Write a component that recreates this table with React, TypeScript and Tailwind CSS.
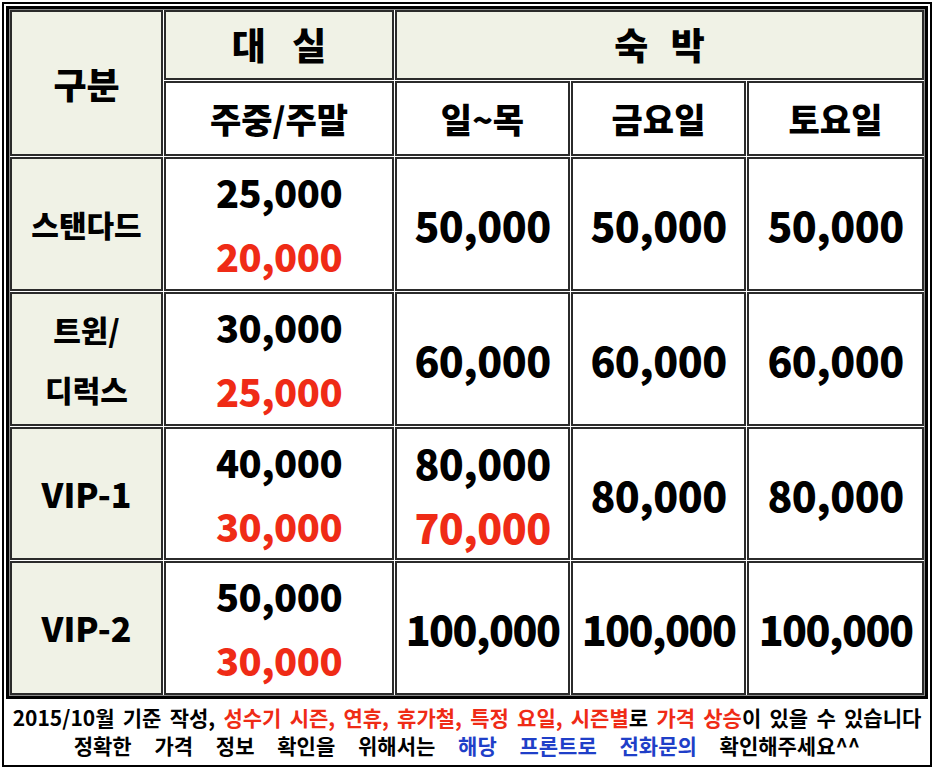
const RED = 'text-[#ef2b16]';

type Row = {
  label: string[];
  latin?: boolean;
  day: string[];
  stay: string[][];
};

const rows: Row[] = [
  {
    label: ['스탠다드'],
    day: ['25,000', '20,000'],
    stay: [['50,000'], ['50,000'], ['50,000']],
  },
  {
    label: ['트윈/', '디럭스'],
    day: ['30,000', '25,000'],
    stay: [['60,000'], ['60,000'], ['60,000']],
  },
  {
    label: ['VIP-1'],
    latin: true,
    day: ['40,000', '30,000'],
    stay: [['80,000', '70,000'], ['80,000'], ['80,000']],
  },
  {
    label: ['VIP-2'],
    latin: true,
    day: ['50,000', '30,000'],
    stay: [['100,000'], ['100,000'], ['100,000']],
  },
];

const cell = 'flex flex-col items-center justify-center border-2 border-[#2b2b2b]';
const shade = 'bg-[#f0f2e6]';

// stacked prices: first line black, second line red
const Prices = ({ values, size }: { values: string[]; size: string }) => (
  <>
    {values.map((v, i) => (
      <span
        key={v + i}
        className={`${size} leading-[64px] ${i === 1 ? RED : 'text-black'} ${v.length > 6 ? 'tracking-[-1.5px]' : 'tracking-[-0.5px]'}`}
      >
        {v}
      </span>
    ))}
  </>
);

const App = () => {
  return (
    <div
      className="w-[936px] h-[769px] bg-white pt-[2px] pl-[2px]"
      style={{ fontFamily: '"Noto Sans CJK KR", "Noto Sans", sans-serif' }}
    >
      <div className="w-[930px] h-[765px] border-2 border-black p-[2px]">
        <div className="w-[922px] border-[3px] border-black">
          <div className="border border-[#8a8a8a] bg-white">
            <div className="grid grid-cols-[153px_230px_175px_175px_177px] grid-rows-[70px_75px_134px_134px_133px_134px] gap-px font-black text-black">
              <div className={`${cell} ${shade} row-span-2 text-[36px]`}>구분</div>
              <div className={`${cell} ${shade} text-[37px] [word-spacing:18px]`}>대 실</div>
              <div className={`${cell} ${shade} col-span-3 text-[37px] [word-spacing:14px]`}>숙 박</div>
              <div className={`${cell} text-[34px]`}>주중/주말</div>
              <div className={`${cell} text-[34px]`}>일~목</div>
              <div className={`${cell} text-[34px]`}>금요일</div>
              <div className={`${cell} text-[34px]`}>토요일</div>

              {rows.map((r) => (
                <div key={r.label.join('')} className="contents">
                  <div className={`${cell} ${shade}`}>
                    {r.label.map((l) => (
                      <span
                        key={l}
                        className={r.latin ? 'text-[34px] leading-[60px]' : 'text-[30px] leading-[60px]'}
                      >
                        {l}
                      </span>
                    ))}
                  </div>
                  <div className={cell}>
                    <Prices values={r.day} size="text-[38px]" />
                  </div>
                  {r.stay.map((s, i) => (
                    <div key={i} className={cell}>
                      <Prices values={s} size="text-[41px]" />
                    </div>
                  ))}
                </div>
              ))}
            </div>
          </div>
        </div>

        <div className="pt-[4px] text-center text-[21px] font-bold leading-[28px] text-black">
          <p className="[word-spacing:3.5px] whitespace-nowrap">
            2015/10월 기준 작성,{' '}
            <span className={RED}>성수기 시즌, 연휴, 휴가철, 특정 요일, 시즌별</span>로{' '}
            <span className={RED}>가격 상승</span>이 있을 수 있습니다
          </p>
          <p className="[word-spacing:18px] whitespace-nowrap">
            정확한 가격 정보 확인을 위해서는{' '}
            <span className="text-[#1f3fc8]">해당 프론트로 전화문의</span> 확인해주세요^^
          </p>
        </div>
      </div>
    </div>
  );
};

export default App;
